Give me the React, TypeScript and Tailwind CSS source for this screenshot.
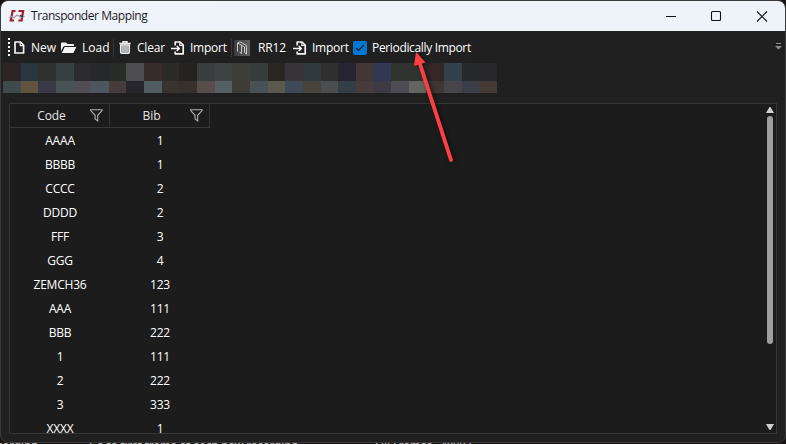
import type { ReactNode } from 'react';

const topTiles = ['#2d2525', '#28363e', '#303230', '#384142', '#2b2a2d', '#272829', '#292b29', '#4d4c4e', '#382c2b', '#2b2a29', '#242320', '#393d3e', '#3e4244', '#3d3e38', '#363b3b', '#272623', '#37343a', '#303a3c', '#302f30', '#252430', '#423735', '#313952', '#313330', '#303330', '#332727', '#35414a', '#272a2c', '#28282b'];
const bottomTiles = ['#404a4c', '#605440', '#3a3a46', '#495356', '#514f56', '#4d565e', '#463c3d', '#27252c', '#505c60', '#37342f', '#37312c', '#574d4b', '#546063', '#3d3c36', '#485256', '#59594e', '#404a56', '#48433c', '#4b4d4f', '#333e46', '#463c3c', '#3e3a43', '#4d4c54', '#64645f', '#403636', '#47444a', '#393e4a', '#453a35'];

const rows = [
  ['AAAA', '1'], ['BBBB', '1'], ['CCCC', '2'], ['DDDD', '2'], ['FFF', '3'], ['GGG', '4'],
  ['ZEMCH36', '123'], ['AAA', '111'], ['BBB', '222'], ['1', '111'], ['2', '222'], ['3', '333'], ['XXXX', '1'],
];

function Logo() {
  return (
    <svg width="16" height="14" viewBox="0 0 16 14" fill="none">
      <path d="M6.5 2H3.6L1.8 11.5H5M9.5 2h4.6L12.6 11.5H9.3" stroke="#9c2026" strokeWidth="2.2" />
      <path d="M0 8.6l2.6-1.2 2.6 1.4 2.4-2.6 2.2.6 1.8 1.5 4-1" stroke="#a3a1a6" strokeWidth="1.3" />
      <path d="M11 6.4l3 1.4" stroke="#303035" strokeWidth="1.4" />
    </svg>
  );
}

function FileIcon() {
  return (
    <svg width="11" height="13" viewBox="0 0 11 13" fill="none" stroke="#f4f4f4" strokeWidth="1.7" strokeLinejoin="round">
      <path d="M1 1h5.4L9.6 4.2V12H1z" />
      <path d="M6.2 1v3.6h3.4" strokeWidth="1.2" />
    </svg>
  );
}

function FolderIcon() {
  return (
    <svg width="16" height="12" viewBox="0 0 16 12" fill="#f4f4f4">
      <path d="M0 9V1.4Q0 .5 1 .5h4l1.5 1.5H12q1 0 1 1v1H3.6Q2.7 4 2.3 4.8z" />
      <path d="M3.7 5H15.3L12.8 10.3q-.4.7-1.2.7H.8z" />
    </svg>
  );
}

function TrashIcon() {
  return (
    <svg width="12" height="13" viewBox="0 0 12 13" fill="none" stroke="#eeeeee">
      <path d="M.3 2.4h11.4M4 2V.8h4V2" strokeWidth="1.5" />
      <path d="M1.7 4V11q0 1.2 1.1 1.2h6.4q1.1 0 1.1-1.2V4z" fill="#6b7175" strokeWidth="1.5" />
      <path d="M4 5v6M6 5v6M8 5v6" strokeWidth="1.1" />
    </svg>
  );
}

function ImportIcon() {
  return (
    <svg width="14" height="14" viewBox="0 0 14 14" fill="none" stroke="#f4f4f4" strokeWidth="1.7" strokeLinejoin="round">
      <path d="M4.2 4.4V1h4.9l3.1 3.1v8.7H4.2V10.6" />
      <path d="M8.8 1v3.5h3.4" strokeWidth="1.2" />
      <path d="M0 7.5h7.6M5.8 5l2.5 2.5L5.8 10" />
    </svg>
  );
}

function RaceIcon() {
  return (
    <svg width="16" height="16" viewBox="0 0 16 16" fill="none">
      <defs>
        <linearGradient id="raceTile" x1="0" y1="0" x2="1" y2="0">
          <stop stopColor="#3c3c3c" />
          <stop offset="1" stopColor="#606060" />
        </linearGradient>
      </defs>
      <rect width="16" height="16" fill="url(#raceTile)" />
      <path d="M3.5 11.5V3L7.5 5.2V13.5L5.5 12M3.5 3L6 1.8L12.5 5.5V14L10.5 12.5V7L7.5 5.2" stroke="#d6d6d6" strokeWidth=".9" />
    </svg>
  );
}

function FilterIcon() {
  return (
    <svg width="13" height="13" viewBox="0 0 13 13" fill="none" stroke="#b0b0b0" strokeWidth="1.1">
      <path d="M.7.7h11.4v.8L7.7 6.3v5.6L5.1 9.9V6.3L.7 1.5z" />
    </svg>
  );
}

function Label({ className, children }: { className: string; children: ReactNode }) {
  return <span className={`shrink-0 whitespace-nowrap ${className}`}>{children}</span>;
}

function HeaderCell({ children }: { children: ReactNode }) {
  return (
    <div className="flex h-[24px] w-[100px] items-center border-r border-b border-[#363636]">
      <span className="w-[84px] pr-[1px] text-center tracking-[-0.1px]">{children}</span>
      <div className="-ml-1 w-[13px] shrink-0"><FilterIcon /></div>
    </div>
  );
}

export default function App() {
  return (
    <div className="relative h-[444px] w-[786px] overflow-hidden bg-[#161314] font-['Open_Sans','Noto_Sans',sans-serif] text-[12px] text-white">
      <div className="absolute bottom-0 left-0 h-[1px] w-full overflow-hidden text-[11px] leading-[3px] font-semibold text-[#b5b0b0]">
        <div className="flex whitespace-nowrap">
          <span className="-ml-[14px] w-[103px]">recording</span>
          <span className="w-[286px]">Go to first frame of each new recording</span>
          <span>Fill Frames &nbsp; 4x003</span>
        </div>
      </div>
      <div className="relative flex h-[443px] w-[786px] flex-col overflow-hidden rounded-[8px] border border-[#3b3b3b] bg-[#202020]">
        <header className="flex h-[30px] shrink-0 items-center bg-gradient-to-r from-[#eff3fb] to-[#edf3f7] text-[#1b1b1b]">
          <div className="ml-2 w-[22px] shrink-0"><Logo /></div>
          <Label className="w-[635px] tracking-[-0.42px]">Transponder Mapping</Label>
          <svg className="-mt-px" width="104" height="12" viewBox="0 0 104 12" fill="none" stroke="#111" strokeWidth="1.1">
            <path d="M0 6.5h10M91 1.5l10 10M101 1.5L91 11.5" />
            <rect x="45.5" y="1.5" width="9" height="9" rx="1" />
          </svg>
        </header>

        <div className="flex h-[32px] shrink-0 items-center pt-px leading-4">
          <div className="ml-[7px] h-[19px] w-[2px] shrink-0 bg-[repeating-linear-gradient(to_bottom,#ffffff_0px,#ffffff_2px,transparent_2px,transparent_4px)]" />
          <div className="ml-[4px] w-[17px] shrink-0"><FileIcon /></div>
          <Label className="w-[30px] pt-px">New</Label>
          <div className="w-[21px] shrink-0"><FolderIcon /></div>
          <Label className="w-[31px] pt-px">Load</Label>
          <div className="h-[18px] w-px shrink-0 bg-[#363636]" />
          <div className="ml-[5px] w-[18px] shrink-0"><TrashIcon /></div>
          <Label className="w-[34px] pt-px tracking-[-0.2px]">Clear</Label>
          <div className="w-[19px] shrink-0"><ImportIcon /></div>
          <Label className="w-[41px] pt-px tracking-[-0.25px]">Import</Label>
          <div className="h-[18px] w-px shrink-0 bg-[#363636]" />
          <div className="ml-[2px] w-[24px] shrink-0"><RaceIcon /></div>
          <Label className="w-[35px] pt-px tracking-[-0.1px]">RR12</Label>
          <div className="w-[19px] shrink-0"><ImportIcon /></div>
          <Label className="w-[41px] pt-px tracking-[-0.25px]">Import</Label>
          <div className="flex h-[14px] w-[14px] shrink-0 items-center justify-center rounded-[2px] bg-[#0078d4]">
            <svg width="10" height="8" viewBox="0 0 10 8" fill="none" stroke="#101820" strokeWidth="1.1"><path d="M1 4l2.5 2.5L9 1" /></svg>
          </div>
          <Label className="ml-[5px] pt-px tracking-[-0.34px]">Periodically Import</Label>
          <svg className="mr-[3px] -mt-[2px] ml-auto shrink-0" width="7" height="7" viewBox="0 0 7 7" fill="#8d8d8d"><path d="M1 0h5v1H1zM0 3h7L3.5 6.5z" /></svg>
        </div>

        <div className="ml-[2px] w-[494px] shrink-0">
          <div className="flex h-[18px]">{topTiles.map((color, i) => <div key={i} className="flex-1" style={{ backgroundColor: color }} />)}</div>
          <div className="flex h-[12px]">{bottomTiles.map((color, i) => <div key={i} className="flex-1" style={{ backgroundColor: color }} />)}</div>
        </div>

        <main className="mt-[10px] ml-[8px] flex h-[331px] w-[768px] shrink-0 justify-between overflow-hidden border border-[#363636] bg-[#1c1c1c]">
          <div className="w-[200px]">
            <div className="flex text-[#e5e5e5]"><HeaderCell>Code</HeaderCell><HeaderCell>Bib</HeaderCell></div>
            <div className="pt-px">
              {rows.map(([code, bib], i) => (
                <div key={i} className="flex h-[24px] items-center text-center tracking-[-0.2px]">
                  <span className="w-[100px]">{code}</span><span className="w-[100px]">{bib}</span>
                </div>
              ))}
            </div>
          </div>
          <div className="mr-[2px] flex h-full w-[8px] flex-col items-center">
            <svg className="mt-[3px] shrink-0" width="8" height="6" viewBox="0 0 8 6" fill="#d0d0d0"><path d="M3.5 0h1L8 6H0z" /></svg>
            <div className="mt-[3px] h-[228px] w-[6px] shrink-0 rounded-full bg-[#9f9f9f]" />
            <svg className="mt-auto mb-[3px] shrink-0" width="8" height="6" viewBox="0 0 8 6" fill="#d0d0d0"><path d="M0 0h8L4.5 6h-1z" /></svg>
          </div>
        </main>
      </div>

      <svg className="pointer-events-none absolute top-[48px] left-[405px] drop-shadow-[2px_2px_2px_rgba(0,0,0,0.6)]" width="60" height="120" viewBox="0 0 60 120">
        <path d="M14 13L46 112" stroke="#fc3f43" strokeWidth="3.9" strokeLinecap="round" />
        <path d="M11 4L20.5 14.5L9 18z" fill="#fc3f43" />
      </svg>
    </div>
  );
}
